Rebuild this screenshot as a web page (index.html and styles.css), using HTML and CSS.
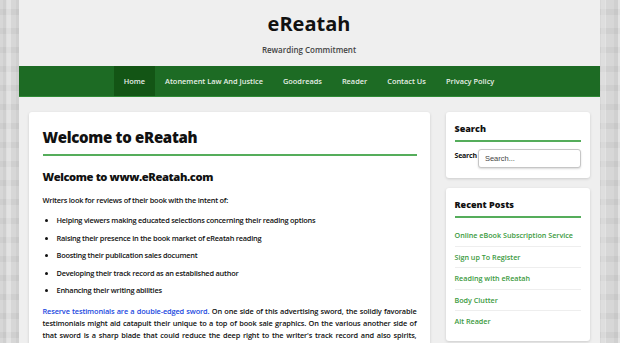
FILE: index.html
```html
<!DOCTYPE html>
<html lang="en">
<head>
    <meta charset="UTF-8">
    <meta name="viewport" content="width=device-width, initial-scale=1.0">
    <title>eReatah</title>
    <link rel="stylesheet" href="styles.css">
</head>
<body>
    <div class="page">
        <header class="site-header">
            <div class="site-title">eReatah</div>
            <div class="site-tagline">Rewarding Commitment</div>
        </header>
        <nav class="main-nav">
            <a href="#" class="active">Home</a>
            <a href="#">Atonement Law And Justice</a>
            <a href="#">Goodreads</a>
            <a href="#">Reader</a>
            <a href="#">Contact Us</a>
            <a href="#">Privacy Policy</a>
        </nav>
        <div class="content">
            <main class="card main-card">
                <h1>Welcome to eReatah</h1>
                <h2>Welcome to www.eReatah.com</h2>
                <p>Writers look for reviews of their book with the intent of:</p>
                <ul>
                    <li>Helping viewers making educated selections concerning their reading options</li>
                    <li>Raising their presence in the book market of eReatah reading</li>
                    <li>Boosting their publication sales document</li>
                    <li>Developing their track record as an established author</li>
                    <li>Enhancing their writing abilities</li>
                </ul>
                <p class="body-text"><a href="#">Reserve testimonials are a double-edged sword.</a> On one side of this advertising sword, the solidly favorable testimonials might aid catapult their unique to a top of book sale graphics. On the various another side of that sword is a sharp blade that could reduce the deep right to the writer's track record and also spirits, leaving them wondering whether they should keep writing at all.</p>
            </main>
            <aside class="sidebar">
                <div class="card widget search-widget">
                    <h3>Search</h3>
                    <div class="search-row">
                        <label for="s">Search</label>
                        <input type="text" id="s" placeholder="Search...">
                    </div>
                </div>
                <div class="card widget">
                    <h3>Recent Posts</h3>
                    <ul class="recent">
                        <li><a href="#">Online eBook Subscription Service</a></li>
                        <li><a href="#">Sign up To Register</a></li>
                        <li><a href="#">Reading with eReatah</a></li>
                        <li><a href="#">Body Clutter</a></li>
                        <li><a href="#">Alt Reader</a></li>
                    </ul>
                </div>
            </aside>
        </div>
    </div>
</body>
</html>
```
FILE: styles.css
```css
html, body {
    height: 100%;
}
body {
    margin: 0;
    font-family: "Open Sans", "DejaVu Sans", sans-serif;
    color: #111;
    background-color: #d7d7d7;
    background-image:
        linear-gradient(90deg, transparent 6px, rgba(255,255,255,0.3) 6px 11px, transparent 11px),
        linear-gradient(transparent 9px, rgba(0,0,0,0.04) 9px 15px, transparent 15px),
        linear-gradient(90deg, transparent 3px, rgba(0,0,0,0.03) 3px 7px, transparent 7px);
    background-size: 17px 23px, 21px 19px, 13px 29px;
    overflow: hidden;
}
.page {
    width: 581px;
    margin: 0 auto;
    min-height: 100%;
    background: #efefef;
    position: relative;
    left: -1px;
}
.site-header {
    text-align: center;
    padding-top: 12px;
    height: 55px;
    box-sizing: border-box;
}
.site-title {
    font-size: 20px;
    font-weight: 700;
    color: #111;
    line-height: 24px;
}
.site-tagline {
    font-size: 8px;
    color: #444;
    font-weight: 600;
    margin-top: 8px;
}
.main-nav {
    margin-top: 11px;
    height: 30px;
    background: #1d6b24;
    border-bottom: 1px solid #2f8a36;
    display: flex;
    justify-content: center;
}
.main-nav a {
    color: #e6efe6;
    text-decoration: none;
    font-size: 7.4px;
    font-weight: 600;
    padding: 0 10px;
    display: flex;
    align-items: center;
}
.main-nav a.active {
    background: #135515;
}
.content {
    display: flex;
    gap: 16px;
    padding: 15px 10px 0 10px;
}
.card {
    background: #fff;
    border-radius: 3px;
    box-shadow: 0 1px 3px rgba(0, 0, 0, 0.15);
}
.main-card {
    width: 401px;
    box-sizing: border-box;
    padding: 15px 13px 20px 14px;
    font-size: 7.4px;
    font-weight: 600;
    letter-spacing: -0.23px;
}
.main-card h1 {
    font-size: 15px;
    font-weight: 800;
    letter-spacing: -0.3px;
    margin: 0;
    padding-bottom: 7px;
    border-bottom: 2px solid #55ad5b;
}
.main-card h2 {
    font-size: 11.2px;
    font-weight: 800;
    letter-spacing: -0.4px;
    margin: 13px 0 0;
}
.main-card p {
    margin: 10px 0 0;
    line-height: 12.3px;
}
.main-card ul {
    margin: 6px 0 0;
    padding-left: 14px;
}
.main-card li {
    line-height: 17.5px;
}
.main-card .body-text {
    text-align: justify;
    margin-top: 5px;
    letter-spacing: -0.14px;
}
.main-card a {
    color: #2148e0;
    text-decoration: none;
}
.sidebar {
    width: 144px;
    display: flex;
    flex-direction: column;
    gap: 10px;
}
.widget {
    padding: 10px 9px 9px 9px;
}
.search-widget {
    padding-bottom: 10px;
}
.widget h3 {
    font-size: 9px;
    font-weight: 800;
    margin: 0;
    padding-bottom: 5px;
    border-bottom: 2px solid #55ad5b;
}
.search-row {
    display: flex;
    align-items: center;
    margin-top: 7px;
    font-size: 7px;
    font-weight: 700;
    letter-spacing: -0.2px;
}
.search-row label {
    margin-top: -6px;
}
.search-row input {
    width: 100%;
    min-width: 0;
    height: 19px;
    box-sizing: border-box;
    border: 1px solid #c6c6c6;
    border-radius: 3px;
    box-shadow: 0 1px 2px rgba(0, 0, 0, 0.15);
    font-family: "Liberation Sans", sans-serif;
    font-size: 7.5px;
    padding: 0 6px;
    margin-left: 1px;
}
.search-row input::placeholder {
    color: #444;
}
.recent {
    list-style: none;
    margin: 7px 0 0;
    padding: 0;
}
.recent li {
    border-bottom: 1px solid #eee;
    line-height: 20.5px;
    font-size: 7.2px;
    font-weight: 600;
}
.recent li:last-child {
    border-bottom: none;
}
.recent a {
    color: #3b9a3e;
    text-decoration: none;
}
```
